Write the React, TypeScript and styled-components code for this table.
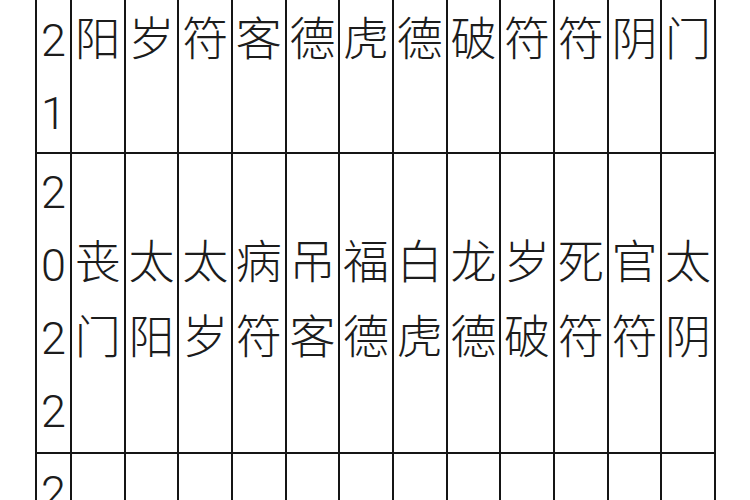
import * as React from 'react';
import styled, {createGlobalStyle} from 'styled-components';

const Global = createGlobalStyle`
  html, body {
    margin: 0;
    padding: 0;
    background: #fff;
  }
`;

const Viewport = styled.div`
  width: 750px;
  height: 500px;
  overflow: hidden;
  background: #fff;
`;

const Table = styled.table`
  border-collapse: collapse;
  table-layout: fixed;
  width: 681px;
  margin: -144px 0 0 35px;
  color: #1c1c1c;
`;

const Row = styled.tr<{$h: number}>`
  > td {
    height: ${p => p.$h}px;
  }
`;

const Cell = styled.td<{$year?: boolean}>`
  border: 2px solid #151515;
  padding: 0;
  vertical-align: middle;
  text-align: center;
  font-size: ${p => (p.$year ? '45px' : '46px')};
  font-weight: 300;
  font-family: ${p => (p.$year ? 'Roboto, sans-serif' : '"Noto Sans CJK SC", sans-serif')};
`;

const StackBox = styled.div<{$lift: number}>`
  display: flex;
  flex-direction: column;
  align-items: center;
  margin-bottom: ${p => p.$lift}px;
`;

const Line = styled.div<{$lh: number}>`
  line-height: ${p => p.$lh}px;
  height: ${p => p.$lh}px;
  white-space: nowrap;
`;

const rows: {year: string; h: number; gods: string[]}[] = [
  {
    year: '2021',
    h: 294,
    gods: ['太阳', '太岁', '病符', '吊客', '福德', '白虎', '龙德', '岁破', '死符', '官符', '太阴', '丧门'],
  },
  {
    year: '2022',
    h: 298,
    gods: ['丧门', '太阳', '太岁', '病符', '吊客', '福德', '白虎', '龙德', '岁破', '死符', '官符', '太阴'],
  },
  {
    year: '2023',
    h: 298,
    gods: ['太阴', '丧门', '太阳', '太岁', '病符', '吊客', '福德', '白虎', '龙德', '岁破', '死符', '官符'],
  },
];

const Stack: React.FC<{text: string; lh: number; lift: number}> = ({text, lh, lift}) => (
  <StackBox $lift={lift}>
    {text.split('').map((ch, i) => (
      <Line key={i} $lh={lh}>
        {ch}
      </Line>
    ))}
  </StackBox>
);

const App: React.FC = () => {
  return (
    <Viewport>
      <Global />
      <Table>
        <colgroup>
          <col style={{width: 35}} />
          {Array.from({length: 12}).map((_, i) => (
            <col key={i} />
          ))}
        </colgroup>
        <tbody>
          {rows.map(r => (
            <Row key={r.year} $h={r.h}>
              <Cell $year>
                <Stack text={r.year} lh={73} lift={2} />
              </Cell>
              {r.gods.map((g, i) => (
                <Cell key={i}>
                  <Stack text={g} lh={75} lift={14} />
                </Cell>
              ))}
            </Row>
          ))}
        </tbody>
      </Table>
    </Viewport>
  );
};

export default App;
